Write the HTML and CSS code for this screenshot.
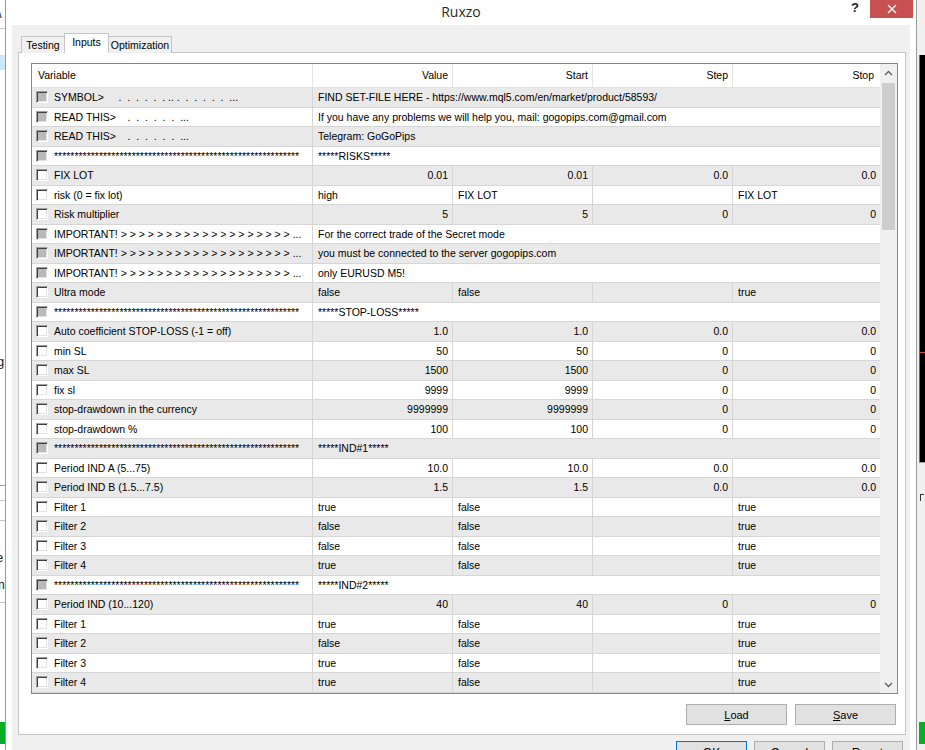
FILE: index.html
```html
<!DOCTYPE html>
<html lang="en">
<head>
    <meta charset="UTF-8">
    <title>Ruxzo</title>
    <link rel="stylesheet" href="styles.css">
</head>
<body>

<!-- background application, left edge -->
<div class="app-left">
    <span class="frag frag-slash">\</span>
    <div class="rule r-top"></div>
    <div class="sel"></div>
    <span class="frag frag-g">g</span>
    <div class="rule r-a"></div>
    <div class="rule r-b"></div>
    <div class="rule r-c"></div>
    <span class="frag frag-e">e</span>
    <span class="frag frag-m">m</span>
    <div class="rule r-d"></div>
    <div class="green"></div>
</div>

<div class="dialog">
    <div class="titlebar">
        Ruxzo
        <span class="help">?</span>
        <span class="close">
            <svg width="10" height="10" viewBox="0 0 10 10"><path d="M1 1L9 9M9 1L1 9" stroke="#fff" stroke-width="1.3" fill="none"/></svg>
        </span>
    </div>

    <div class="client">
        <div class="tabs">
            <div class="tab t-testing">Testing</div>
            <div class="tab t-inputs active">Inputs</div>
            <div class="tab t-opt">Optimization</div>
        </div>

        <div class="panel">
            <div class="grid">
                <div class="table">
                    <div class="head">
                        <div class="hcell left">Variable</div>
                        <div class="hcell">Value</div>
                        <div class="hcell">Start</div>
                        <div class="hcell">Step</div>
                        <div class="hcell">Stop</div>
                    </div>

                    <div class="row">
                        <div class="cell var"><span class="cb off"></span><span class="name">SYMBOL&gt;     .  .  .  .  .  . .. .  .  .  .  .  .  ...</span></div>
                        <div class="cell wide">FIND SET-FILE HERE - https://www.mql5.com/en/market/product/58593/</div>
                    </div>
                    <div class="row">
                        <div class="cell var"><span class="cb off"></span><span class="name">READ THIS&gt;    .  .  .  .  .  .  ...</span></div>
                        <div class="cell wide">If you have any problems we will help you, mail: gogopips.com@gmail.com</div>
                    </div>
                    <div class="row">
                        <div class="cell var"><span class="cb off"></span><span class="name">READ THIS&gt;    .  .  .  .  .  .  ...</span></div>
                        <div class="cell wide">Telegram: GoGoPips</div>
                    </div>
                    <div class="row">
                        <div class="cell var"><span class="cb off"></span><span class="name stars">************************************************************</span></div>
                        <div class="cell wide">*****RISKS*****</div>
                    </div>
                    <div class="row">
                        <div class="cell var"><span class="cb"></span><span class="name">FIX LOT</span></div>
                        <div class="cell num">0.01</div>
                        <div class="cell num">0.01</div>
                        <div class="cell num">0.0</div>
                        <div class="cell num">0.0</div>
                    </div>
                    <div class="row">
                        <div class="cell var"><span class="cb"></span><span class="name">risk (0 = fix lot)</span></div>
                        <div class="cell">high</div>
                        <div class="cell">FIX LOT</div>
                        <div class="cell"></div>
                        <div class="cell">FIX LOT</div>
                    </div>
                    <div class="row">
                        <div class="cell var"><span class="cb"></span><span class="name">Risk multiplier</span></div>
                        <div class="cell num">5</div>
                        <div class="cell num">5</div>
                        <div class="cell num">0</div>
                        <div class="cell num">0</div>
                    </div>
                    <div class="row">
                        <div class="cell var"><span class="cb off"></span><span class="name">IMPORTANT! &gt; &gt; &gt; &gt; &gt; &gt; &gt; &gt; &gt; &gt; &gt; &gt; &gt; &gt; &gt; &gt; &gt; &gt; &gt; ...</span></div>
                        <div class="cell wide">For the correct trade of the Secret mode</div>
                    </div>
                    <div class="row">
                        <div class="cell var"><span class="cb off"></span><span class="name">IMPORTANT! &gt; &gt; &gt; &gt; &gt; &gt; &gt; &gt; &gt; &gt; &gt; &gt; &gt; &gt; &gt; &gt; &gt; &gt; &gt; ...</span></div>
                        <div class="cell wide">you must be connected to the server gogopips.com</div>
                    </div>
                    <div class="row">
                        <div class="cell var"><span class="cb off"></span><span class="name">IMPORTANT! &gt; &gt; &gt; &gt; &gt; &gt; &gt; &gt; &gt; &gt; &gt; &gt; &gt; &gt; &gt; &gt; &gt; &gt; &gt; ...</span></div>
                        <div class="cell wide">only EURUSD M5!</div>
                    </div>
                    <div class="row">
                        <div class="cell var"><span class="cb"></span><span class="name">Ultra mode</span></div>
                        <div class="cell">false</div>
                        <div class="cell">false</div>
                        <div class="cell"></div>
                        <div class="cell">true</div>
                    </div>
                    <div class="row">
                        <div class="cell var"><span class="cb off"></span><span class="name stars">************************************************************</span></div>
                        <div class="cell wide">*****STOP-LOSS*****</div>
                    </div>
                    <div class="row">
                        <div class="cell var"><span class="cb"></span><span class="name">Auto coefficient STOP-LOSS (-1 = off)</span></div>
                        <div class="cell num">1.0</div>
                        <div class="cell num">1.0</div>
                        <div class="cell num">0.0</div>
                        <div class="cell num">0.0</div>
                    </div>
                    <div class="row">
                        <div class="cell var"><span class="cb"></span><span class="name">min SL</span></div>
                        <div class="cell num">50</div>
                        <div class="cell num">50</div>
                        <div class="cell num">0</div>
                        <div class="cell num">0</div>
                    </div>
                    <div class="row">
                        <div class="cell var"><span class="cb"></span><span class="name">max SL</span></div>
                        <div class="cell num">1500</div>
                        <div class="cell num">1500</div>
                        <div class="cell num">0</div>
                        <div class="cell num">0</div>
                    </div>
                    <div class="row">
                        <div class="cell var"><span class="cb"></span><span class="name">fix sl</span></div>
                        <div class="cell num">9999</div>
                        <div class="cell num">9999</div>
                        <div class="cell num">0</div>
                        <div class="cell num">0</div>
                    </div>
                    <div class="row">
                        <div class="cell var"><span class="cb"></span><span class="name">stop-drawdown in the currency</span></div>
                        <div class="cell num">9999999</div>
                        <div class="cell num">9999999</div>
                        <div class="cell num">0</div>
                        <div class="cell num">0</div>
                    </div>
                    <div class="row">
                        <div class="cell var"><span class="cb"></span><span class="name">stop-drawdown %</span></div>
                        <div class="cell num">100</div>
                        <div class="cell num">100</div>
                        <div class="cell num">0</div>
                        <div class="cell num">0</div>
                    </div>
                    <div class="row">
                        <div class="cell var"><span class="cb off"></span><span class="name stars">************************************************************</span></div>
                        <div class="cell wide">*****IND#1*****</div>
                    </div>
                    <div class="row">
                        <div class="cell var"><span class="cb"></span><span class="name">Period IND A (5...75)</span></div>
                        <div class="cell num">10.0</div>
                        <div class="cell num">10.0</div>
                        <div class="cell num">0.0</div>
                        <div class="cell num">0.0</div>
                    </div>
                    <div class="row">
                        <div class="cell var"><span class="cb"></span><span class="name">Period IND B (1.5...7.5)</span></div>
                        <div class="cell num">1.5</div>
                        <div class="cell num">1.5</div>
                        <div class="cell num">0.0</div>
                        <div class="cell num">0.0</div>
                    </div>
                    <div class="row">
                        <div class="cell var"><span class="cb"></span><span class="name">Filter 1</span></div>
                        <div class="cell">true</div>
                        <div class="cell">false</div>
                        <div class="cell"></div>
                        <div class="cell">true</div>
                    </div>
                    <div class="row">
                        <div class="cell var"><span class="cb"></span><span class="name">Filter 2</span></div>
                        <div class="cell">false</div>
                        <div class="cell">false</div>
                        <div class="cell"></div>
                        <div class="cell">true</div>
                    </div>
                    <div class="row">
                        <div class="cell var"><span class="cb"></span><span class="name">Filter 3</span></div>
                        <div class="cell">false</div>
                        <div class="cell">false</div>
                        <div class="cell"></div>
                        <div class="cell">true</div>
                    </div>
                    <div class="row">
                        <div class="cell var"><span class="cb"></span><span class="name">Filter 4</span></div>
                        <div class="cell">true</div>
                        <div class="cell">false</div>
                        <div class="cell"></div>
                        <div class="cell">true</div>
                    </div>
                    <div class="row">
                        <div class="cell var"><span class="cb off"></span><span class="name stars">************************************************************</span></div>
                        <div class="cell wide">*****IND#2*****</div>
                    </div>
                    <div class="row">
                        <div class="cell var"><span class="cb"></span><span class="name">Period IND (10...120)</span></div>
                        <div class="cell num">40</div>
                        <div class="cell num">40</div>
                        <div class="cell num">0</div>
                        <div class="cell num">0</div>
                    </div>
                    <div class="row">
                        <div class="cell var"><span class="cb"></span><span class="name">Filter 1</span></div>
                        <div class="cell">true</div>
                        <div class="cell">false</div>
                        <div class="cell"></div>
                        <div class="cell">true</div>
                    </div>
                    <div class="row">
                        <div class="cell var"><span class="cb"></span><span class="name">Filter 2</span></div>
                        <div class="cell">false</div>
                        <div class="cell">false</div>
                        <div class="cell"></div>
                        <div class="cell">true</div>
                    </div>
                    <div class="row">
                        <div class="cell var"><span class="cb"></span><span class="name">Filter 3</span></div>
                        <div class="cell">true</div>
                        <div class="cell">false</div>
                        <div class="cell"></div>
                        <div class="cell">true</div>
                    </div>
                    <div class="row">
                        <div class="cell var"><span class="cb"></span><span class="name">Filter 4</span></div>
                        <div class="cell">true</div>
                        <div class="cell">false</div>
                        <div class="cell"></div>
                        <div class="cell">true</div>
                    </div>
                </div>

                <div class="vscroll">
                    <div class="arrow">
                        <svg width="9" height="6" viewBox="0 0 9 6"><path d="M1 5L4.5 1.5L8 5" stroke="#606060" stroke-width="1.4" fill="none"/></svg>
                    </div>
                    <div class="thumb"></div>
                    <div class="track"></div>
                    <div class="arrow">
                        <svg width="9" height="6" viewBox="0 0 9 6"><path d="M1 1L4.5 4.5L8 1" stroke="#606060" stroke-width="1.4" fill="none"/></svg>
                    </div>
                </div>
            </div>

            <div class="panel-buttons">
                <button class="btn"><u>L</u>oad</button>
                <button class="btn"><u>S</u>ave</button>
            </div>
        </div>

        <div class="dialog-buttons">
            <button class="btn big default">OK</button>
            <button class="btn big">Cancel</button>
            <button class="btn big">Reset</button>
        </div>
    </div>
</div>

<!-- background application, right edge -->
<div class="app-right">
    <div class="chart"></div>
    <div class="price"></div>
    <div class="rule r-e"></div>
    <div class="bracket"></div>
    <div class="green"></div>
</div>

</body>
</html>
```

FILE: styles.css
```css
* {
    box-sizing: border-box;
}
html, body {
    margin: 0;
    padding: 0;
}
body {
    width: 925px;
    height: 750px;
    overflow: hidden;
    display: flex;
    font-family: "Liberation Sans", Arial, sans-serif;
    font-size: 10.5px;
    color: #000;
    background: #fff;
}

/* background apps */
.app-left {
    width: 5px;
    flex: none;
    position: relative;
    overflow: hidden;
    background: #fff;
}
.app-right {
    width: 8px;
    flex: none;
    position: relative;
    overflow: hidden;
    background: #f0f0f0;
}
.frag {
    position: absolute;
    font-size: 13px;
    color: #222;
}
.frag-slash { left: -2px; top: 6px; }
.frag-g { left: -3px; top: 354px; }
.frag-e { left: -4px; top: 550px; }
.frag-m { left: -6px; top: 577px; }
.rule {
    position: absolute;
    left: 0;
    right: 0;
    height: 1px;
    background: #c4c4c4;
}
.r-top { top: 28px; }
.r-a { top: 485px; background: #a0a0a0; }
.r-b { top: 500px; }
.r-c { top: 520px; }
.r-d { top: 602px; }
.r-e { top: 462px; left: 2px; background: #a0a0a0; }
.sel {
    position: absolute;
    left: 0;
    right: 0;
    top: 55px;
    height: 15px;
    background: #cce8ff;
}
.green {
    position: absolute;
    left: 0;
    right: 0;
    top: 722px;
    height: 22px;
    background: #06b025;
}
.app-right .green { left: 2px; }
.chart {
    position: absolute;
    left: 2px;
    right: 0;
    top: 55px;
    height: 407px;
    background: #000;
    border-left: 1px solid #6a6a6a;
}
.price {
    position: absolute;
    left: 3px;
    right: 0;
    top: 352px;
    height: 1px;
    background: #e0463c;
}
.bracket {
    position: absolute;
    left: 3px;
    top: 494px;
    width: 4px;
    height: 7px;
    border-left: 1px solid #333;
    border-top: 1px solid #333;
}

/* dialog */
.dialog {
    width: 912px;
    flex: none;
    display: flex;
    flex-direction: column;
    background: #fff;
    border-left: 1px solid #9a9a9a;
    border-right: 1px solid #9a9a9a;
}
.titlebar {
    height: 25px;
    flex: none;
    position: relative;
    text-align: center;
    font-family: "Open Sans", "Liberation Sans", sans-serif;
    font-size: 14px;
    line-height: 24px;
    color: #2b2b2b;
}
.help {
    position: absolute;
    right: 57px;
    top: 0;
    font-family: "Liberation Sans", sans-serif;
    font-weight: bold;
    font-size: 13px;
    line-height: 16px;
    color: #222;
}
.close {
    position: absolute;
    right: 3px;
    top: 0;
    width: 43px;
    height: 18px;
    background: #c75050;
    display: flex;
    align-items: center;
    justify-content: center;
}
.client {
    flex: 1;
    margin: 0 6px;
    padding: 8px 4px 0 6px;
    background: #f0f0f0;
}

/* tabs */
.tabs {
    display: flex;
    align-items: flex-end;
    height: 20px;
    margin: 0 0 -1px 3px;
    position: relative;
    z-index: 1;
}
.tab {
    height: 17px;
    line-height: 16px;
    text-align: center;
    background: #f0f0f0;
    border: 1px solid #c6c6c6;
    border-bottom: none;
    margin-left: -1px;
}
.tab:first-child {
    margin-left: 0;
}
.t-testing { width: 44px; }
.t-inputs { width: 45px; }
.t-opt { width: 64px; }
.tab.active {
    height: 20px;
    line-height: 17px;
    background: #fff;
    position: relative;
    z-index: 1;
}

/* panel */
.panel {
    width: 888px;
    height: 683px;
    background: #fff;
    border: 1px solid #c6c6c6;
    padding: 10px 0 0 12px;
}
.grid {
    width: 867px;
    height: 631px;
    border: 1px solid #828790;
    display: flex;
    background: #fff;
}
.table {
    width: 848px;
    flex: none;
}
.head {
    display: grid;
    grid-template-columns: 281px 140px 140px 140px 147px;
    height: 24px;
    border-bottom: 1px solid #e2e2e2;
}
.hcell {
    text-align: right;
    padding: 0 4px;
    line-height: 23px;
    border-right: 1px solid #e5e5e5;
}
.hcell:last-child {
    border-right: none;
    padding-right: 6px;
}
.hcell.left {
    text-align: left;
    padding-left: 6px;
}
.row {
    display: grid;
    grid-template-columns: 281px 140px 140px 140px 147px;
    height: 19.5px;
    border-bottom: 1px solid #d6d6d6;
}
.row:nth-child(even) {
    background: #e9e9e9;
}
.cell {
    padding: 0 5px;
    line-height: 18.5px;
    white-space: nowrap;
    overflow: hidden;
    border-right: 1px solid #d6d6d6;
}
.cell:last-child {
    border-right: none;
}
.cell.num {
    text-align: right;
    padding-right: 4px;
}
.cell.wide {
    grid-column: 2 / -1;
}
.cell.var {
    display: flex;
    align-items: center;
    padding-left: 4px;
}
.name {
    white-space: pre;
    margin-left: 6px;
}
.cb {
    width: 12px;
    height: 12px;
    flex: none;
    background: #fff;
    border-top: 1px solid #a0a0a0;
    border-left: 1px solid #a0a0a0;
    border-right: 1px solid #fff;
    border-bottom: 1px solid #fff;
    box-shadow: inset 1px 1px 0 #404040, inset -1px -1px 0 #e3e3e3;
}
.cb.off {
    background: #b9b9b9;
}

/* scrollbar */
.vscroll {
    width: 17px;
    flex: none;
    display: flex;
    flex-direction: column;
    background: #f0f0f0;
}
.arrow {
    height: 17px;
    display: flex;
    align-items: center;
    justify-content: center;
}
.thumb {
    height: 147px;
    margin: 2px 2px 0;
    background: #cdcdcd;
}
.track {
    flex: 1;
}

/* buttons */
.btn {
    font-family: "Liberation Sans", Arial, sans-serif;
    font-size: 11px;
    color: #000;
    background: #e1e1e1;
    border: 1px solid #adadad;
    padding: 0;
}
.panel-buttons {
    display: flex;
    justify-content: flex-end;
    gap: 8px;
    width: 865px;
    margin-top: 10px;
}
.panel-buttons .btn {
    width: 101px;
    height: 21px;
}
.dialog-buttons {
    display: flex;
    justify-content: flex-end;
    gap: 7px;
    margin: 6px 3px 0 0;
}
.btn.big {
    width: 71px;
    height: 23px;
    font-size: 12px;
}
.btn.default {
    border-color: #0078d7;
}
```
